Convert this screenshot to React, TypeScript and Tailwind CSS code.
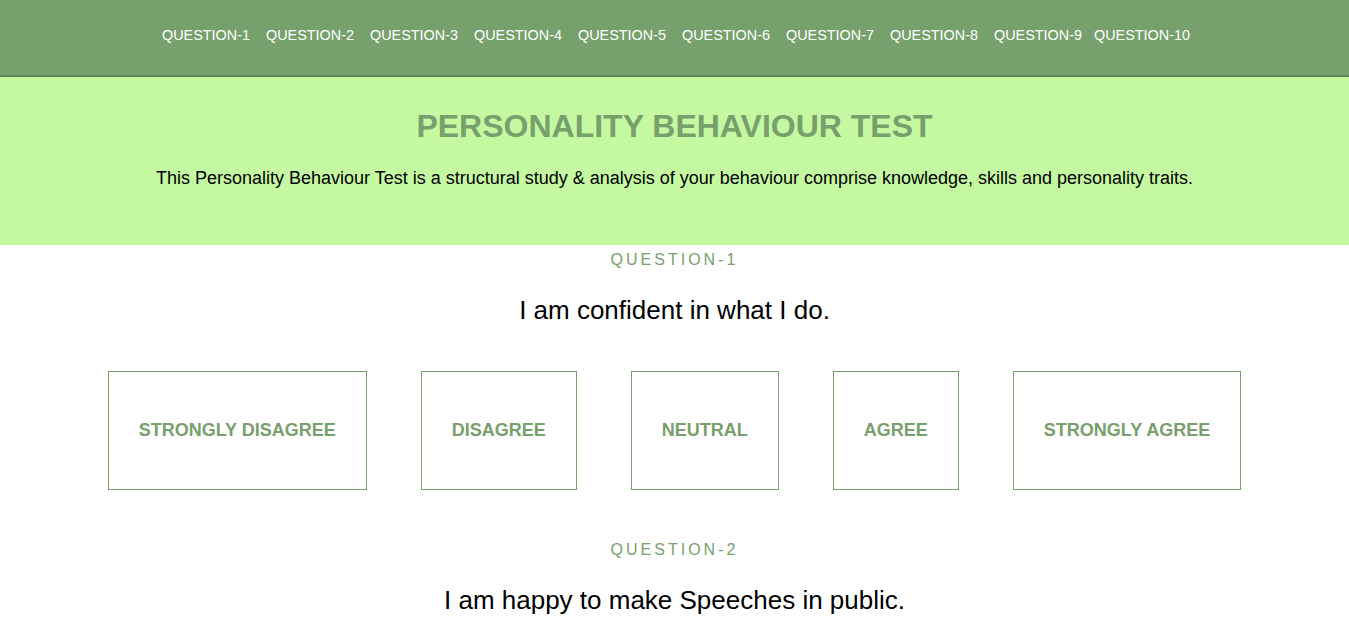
const questions = [
  "I am confident in what I do.",
  "I am happy to make Speeches in public.",
];

const options = ["STRONGLY DISAGREE", "DISAGREE", "NEUTRAL", "AGREE", "STRONGLY AGREE"];

export default function App() {
  return (
    <div className="min-h-screen bg-white font-['Liberation_Sans',Arial,sans-serif]">
      {/* top nav */}
      <nav className="h-[77px] bg-[#76a16c] border-b-2 border-[#62845a] flex items-center justify-center pl-[3px] pb-[3px]">
        {Array.from({ length: 10 }, (_, i) => (
          <a
            key={i}
            href={`#q${i + 1}`}
            className={`text-white text-[14.4px] uppercase ${i < 8 ? "w-[104px]" : i === 8 ? "w-[100px]" : ""}`}
          >
            QUESTION-{i + 1}
          </a>
        ))}
      </nav>

      {/* banner */}
      <header className="bg-[#c4f9a1] h-[168px] pt-[31px] text-center">
        <h1 className="text-[32px] leading-[37px] font-bold text-[#78a06c]">PERSONALITY BEHAVIOUR TEST</h1>
        <p className="mt-[23px] text-[18px] leading-[21px] text-black">
          This Personality Behaviour Test is a structural study &amp; analysis of your behaviour comprise knowledge, skills and personality traits.
        </p>
      </header>

      {/* questions */}
      {questions.map((q, i) => (
        <section key={i} className="text-center pt-[6px] pb-[45px]">
          <h3 className="text-[16px] leading-[18px] tracking-[3px] text-[#78a06c]">QUESTION-{i + 1}</h3>
          <p className="mt-[26px] text-[26px] leading-[30px] text-black">{q}</p>
          <div className="mt-[46px] flex justify-center gap-[54px]">
            {options.map((o) => (
              <button
                key={o}
                className="border border-[#78a06c] h-[119px] px-[30px] text-[18px] font-bold text-[#78a06c] bg-white"
              >
                {o}
              </button>
            ))}
          </div>
        </section>
      ))}
    </div>
  );
}
